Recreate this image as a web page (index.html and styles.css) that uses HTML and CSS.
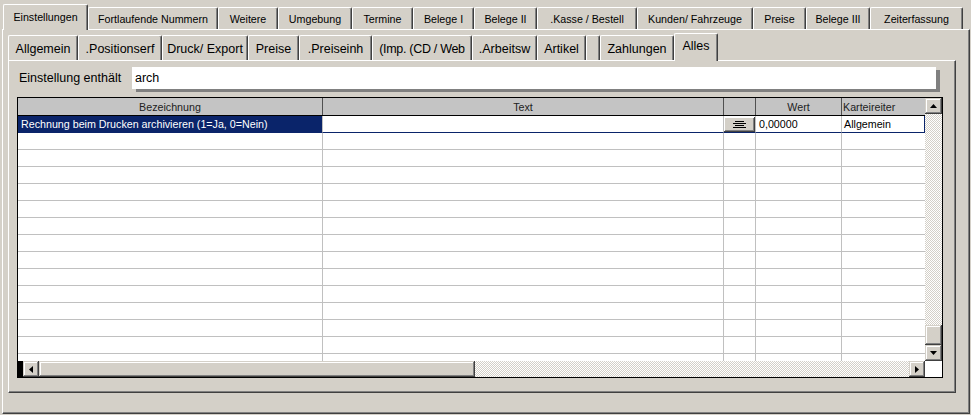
FILE: index.html
```html
<!DOCTYPE html>
<html lang="de">
<head>
<meta charset="utf-8">
<title>Einstellungen</title>
<link rel="stylesheet" href="styles.css">
</head>
<body>
<div class="window">
  <div class="tabs-top">
    <div class="ttab active">Einstellungen</div>
    <div class="ttab">Fortlaufende Nummern</div>
    <div class="ttab">Weitere</div>
    <div class="ttab">Umgebung</div>
    <div class="ttab">Termine</div>
    <div class="ttab">Belege I</div>
    <div class="ttab">Belege II</div>
    <div class="ttab">.Kasse / Bestell</div>
    <div class="ttab">Kunden/ Fahrzeuge</div>
    <div class="ttab">Preise</div>
    <div class="ttab">Belege III</div>
    <div class="ttab">Zeiterfassung</div>
  </div>
  <div class="panel-outer">
    <div class="tabs-inner">
      <div class="itab">Allgemein</div>
      <div class="itab">.Positionserf</div>
      <div class="itab">Druck/ Export</div>
      <div class="itab">Preise</div>
      <div class="itab">.Preiseinh</div>
      <div class="itab">(Imp. (CD / Web</div>
      <div class="itab">.Arbeitsw</div>
      <div class="itab">Artikel</div>
      <div class="itab"></div>
      <div class="itab">Zahlungen</div>
      <div class="itab active">Alles</div>
    </div>
    <div class="panel-inner">
      <div class="filter">
        <span class="filter-label">Einstellung enthält</span>
        <input class="filter-input" type="text" value="arch">
      </div>
      <div class="grid">
        <div class="grid-main">
          <div class="grid-head">
            <div class="hc center">Bezeichnung</div>
            <div class="hc center">Text</div>
            <div class="hc"></div>
            <div class="hc center">Wert</div>
            <div class="hc left">Karteireiter</div>
          </div>
          <div class="grid-body">
            <div class="row sel">
              <div class="cell bez">Rechnung beim Drucken archivieren (1=Ja, 0=Nein)</div>
              <div class="cell"></div>
              <div class="cell btncell"><div class="cellbtn"><svg width="13" height="8" viewBox="0 0 13 8"><rect x="2" y="0" width="9" height="1" fill="#000"/><rect x="0" y="2" width="13" height="1" fill="#000"/><rect x="2" y="4" width="9" height="1" fill="#000"/><rect x="0" y="6" width="13" height="1" fill="#000"/></svg></div></div>
              <div class="cell">0,00000</div>
              <div class="cell last">Allgemein</div>
            </div>
            <div class="row"><div class="cell"></div><div class="cell"></div><div class="cell"></div><div class="cell"></div><div class="cell last"></div></div>
            <div class="row"><div class="cell"></div><div class="cell"></div><div class="cell"></div><div class="cell"></div><div class="cell last"></div></div>
            <div class="row"><div class="cell"></div><div class="cell"></div><div class="cell"></div><div class="cell"></div><div class="cell last"></div></div>
            <div class="row"><div class="cell"></div><div class="cell"></div><div class="cell"></div><div class="cell"></div><div class="cell last"></div></div>
            <div class="row"><div class="cell"></div><div class="cell"></div><div class="cell"></div><div class="cell"></div><div class="cell last"></div></div>
            <div class="row"><div class="cell"></div><div class="cell"></div><div class="cell"></div><div class="cell"></div><div class="cell last"></div></div>
            <div class="row"><div class="cell"></div><div class="cell"></div><div class="cell"></div><div class="cell"></div><div class="cell last"></div></div>
            <div class="row"><div class="cell"></div><div class="cell"></div><div class="cell"></div><div class="cell"></div><div class="cell last"></div></div>
            <div class="row"><div class="cell"></div><div class="cell"></div><div class="cell"></div><div class="cell"></div><div class="cell last"></div></div>
            <div class="row"><div class="cell"></div><div class="cell"></div><div class="cell"></div><div class="cell"></div><div class="cell last"></div></div>
            <div class="row"><div class="cell"></div><div class="cell"></div><div class="cell"></div><div class="cell"></div><div class="cell last"></div></div>
            <div class="row"><div class="cell"></div><div class="cell"></div><div class="cell"></div><div class="cell"></div><div class="cell last"></div></div>
            <div class="row"><div class="cell"></div><div class="cell"></div><div class="cell"></div><div class="cell"></div><div class="cell last"></div></div>
            <div class="row"><div class="cell"></div><div class="cell"></div><div class="cell"></div><div class="cell"></div><div class="cell last"></div></div>
          </div>
        </div>
        <div class="vscroll">
          <div class="sbtn raised"><svg width="7" height="4" viewBox="0 0 7 4"><path d="M3.5 0 L7 4 L0 4 Z" fill="#000"/></svg></div>
          <div class="track"></div>
          <div class="vthumb raised"></div>
          <div class="sbtn raised"><svg width="7" height="4" viewBox="0 0 7 4"><path d="M0 0 L7 0 L3.5 4 Z" fill="#000"/></svg></div>
        </div>
        <div class="hscroll">
          <div class="hblack"></div>
          <div class="hbtn raised"><svg width="4" height="7" viewBox="0 0 4 7"><path d="M4 0 L4 7 L0 3.5 Z" fill="#000"/></svg></div>
          <div class="hthumb raised"></div>
          <div class="track"></div>
          <div class="hbtn raised"><svg width="4" height="7" viewBox="0 0 4 7"><path d="M0 0 L4 3.5 L0 7 Z" fill="#000"/></svg></div>
        </div>
        <div class="corner"></div>
      </div>
    </div>
  </div>
</div>
</body>
</html>
```

FILE: styles.css
```css
* { box-sizing: border-box; }

body {
  margin: 0;
  width: 971px;
  height: 415px;
  overflow: hidden;
  background: #d4d0c8;
  font-family: "Liberation Sans", Arial, sans-serif;
  color: #000;
}

.window {
  padding: 4px 0 0 2px;
}

/* ---------- top tab row ---------- */
.tabs-top {
  display: flex;
  align-items: flex-end;
  height: 25px;
  padding-left: 1px;
}

.ttab,
.itab {
  display: flex;
  align-items: center;
  justify-content: center;
  white-space: nowrap;
  overflow: hidden;
  background: #d4d0c8;
  border-top: 1px solid #fff;
  border-left: 1px solid #fff;
  border-right: 1px solid #404040;
  box-shadow: inset -1px 0 #808080;
  border-radius: 2px 2px 0 0;
}

.ttab {
  height: 22px;
  font-size: 10.7px;
  padding-top: 1px;
}

.ttab.active {
  height: 26px;
  margin-bottom: -1px;
  position: relative;
  z-index: 1;
  padding-top: 0;
  padding-bottom: 2px;
}

.ttab:nth-child(1) { width: 85px; }
.ttab:nth-child(2) { width: 130px; }
.ttab:nth-child(3) { width: 60px; }
.ttab:nth-child(4) { width: 74px; }
.ttab:nth-child(5) { width: 61px; }
.ttab:nth-child(6) { width: 61px; }
.ttab:nth-child(7) { width: 63px; }
.ttab:nth-child(8) { width: 100px; }
.ttab:nth-child(9) { width: 116px; }
.ttab:nth-child(10) { width: 53px; }
.ttab:nth-child(11) { width: 64px; }
.ttab:nth-child(12) { width: 93px; }

/* ---------- outer panel ---------- */
.panel-outer {
  width: 968px;
  height: 385px;
  border-top: 1px solid #fff;
  border-left: 1px solid #fff;
  border-right: 1px solid #404040;
  border-bottom: 1px solid #404040;
  box-shadow: inset -1px -1px #808080;
  padding: 3px 0 0 5px;
}

/* ---------- inner tab row ---------- */
.tabs-inner {
  display: flex;
  align-items: flex-end;
  height: 27px;
}

.itab {
  height: 25px;
  font-size: 12.5px;
  padding-top: 1px;
}

.itab.active {
  height: 28px;
  margin-bottom: -1px;
  position: relative;
  z-index: 1;
  padding-top: 0;
  padding-bottom: 3px;
}

.itab:nth-child(1) { width: 70px; }
.itab:nth-child(2) { width: 84px; }
.itab:nth-child(3) { width: 86px; }
.itab:nth-child(4) { width: 51px; }
.itab:nth-child(5) { width: 73px; }
.itab:nth-child(6) { width: 100px; letter-spacing: -0.3px; }
.itab:nth-child(7) { width: 65px; }
.itab:nth-child(8) { width: 49px; }
.itab:nth-child(9) { width: 14px; }
.itab:nth-child(10) { width: 74px; }
.itab:nth-child(11) { width: 44px; }

/* ---------- inner panel ---------- */
.panel-inner {
  width: 948px;
  height: 333px;
  border-top: 1px solid #fff;
  border-left: 1px solid #fff;
  border-right: 1px solid #404040;
  border-bottom: 1px solid #404040;
  box-shadow: inset -1px -1px #808080;
}

.filter {
  display: flex;
  align-items: center;
  height: 22px;
  margin-top: 6px;
  padding-left: 10px;
}

.filter-label {
  width: 113px;
  font-size: 12.5px;
}

.filter-input {
  width: 804px;
  height: 22px;
  border: 0;
  outline: none;
  margin: 0;
  padding: 0 3px;
  background: #fff;
  font-family: "Liberation Sans", Arial, sans-serif;
  font-size: 12.5px;
  color: #000;
  box-shadow: 4px 3px 0 #808080;
}

/* ---------- grid ---------- */
.grid {
  margin: 8px 0 0 8px;
  width: 926px;
  height: 281px;
  border: 1px solid #000;
  display: grid;
  grid-template-columns: 907px 17px;
  grid-template-rows: 263px 16px;
  background: #fff;
}

.grid-main {
  overflow: hidden;
  font-size: 10.7px;
}

.grid-head,
.row {
  display: grid;
  grid-template-columns: 305px 401px 32px 86px 83px;
}

.grid-head {
  height: 18px;
  background: #c4c4c4;
  border-bottom: 1px solid #000;
}

.hc {
  display: flex;
  align-items: center;
  padding-top: 1px;
  border-right: 1px solid #505050;
  white-space: nowrap;
  overflow: hidden;
  color: #222;
}

.hc:last-child { border-right: 0; }
.hc.center { justify-content: center; }
.hc.left { padding-left: 1px; }

.grid-body {
  height: 245px;
  overflow: hidden;
}

.row {
  height: 17px;
}

.cell {
  display: flex;
  align-items: center;
  padding-left: 3px;
  border-right: 1px solid #c0c0c0;
  border-bottom: 1px solid #c0c0c0;
  white-space: nowrap;
  overflow: hidden;
}

.cell.last { border-right: 0; padding-left: 2px; }

.row.sel .cell { border-bottom-color: #0a246a; }
.row.sel .cell.last { border-right: 1px solid #0a246a; }

.cell.bez {
  background: #0a246a;
  color: #fff;
}

.cell.btncell {
  padding: 1px 0 0 0;
  align-items: stretch;
}

.cellbtn {
  flex: 1;
  display: flex;
  align-items: center;
  justify-content: center;
  background: #d4d0c8;
  box-shadow: inset -1px -1px #404040, inset 1px 1px #fff, inset -2px -2px #808080;
}

/* ---------- scrollbars ---------- */
.raised {
  background: #d4d0c8;
  box-shadow: inset -1px -1px #404040, inset 1px 1px #d4d0c8, inset -2px -2px #808080, inset 2px 2px #fff;
}

.track {
  background: repeating-conic-gradient(#d4d0c8 0 25%, #fff 0 50%) 0 0 / 2px 2px;
}

.vscroll {
  display: grid;
  grid-template-rows: 16px 211px 20px 16px;
}

.sbtn,
.hbtn {
  display: flex;
  align-items: center;
  justify-content: center;
}

.hscroll {
  display: grid;
  grid-template-columns: 5px 16px 436px 434px 16px;
}

.hblack { background: #000; }

.corner { background: #fff; }
```
